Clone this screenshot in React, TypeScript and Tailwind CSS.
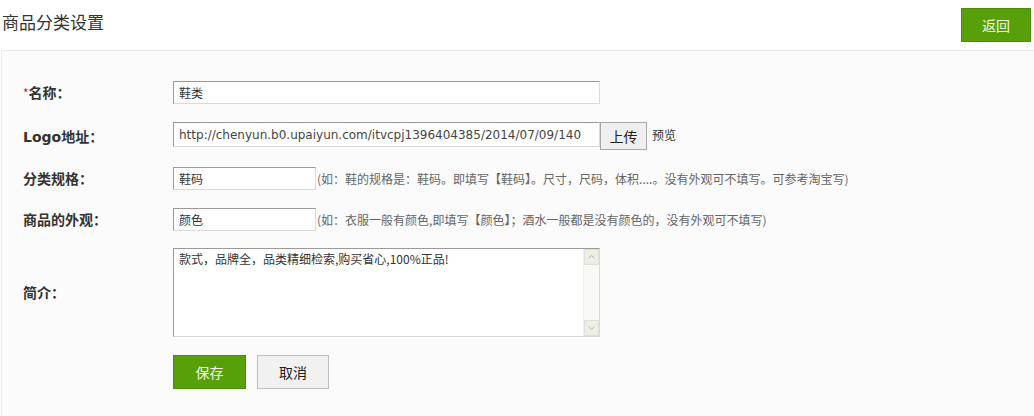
const cjk = "font-['Noto_Sans_CJK_SC','DejaVu_Sans',sans-serif]";

const Label = ({ children, required }: { children: React.ReactNode; required?: boolean }) => (
  <div className="w-[171px] shrink-0 pl-[21px] text-[14px] font-bold text-[#333]">
    {required && <span className="text-[#e02222] text-[12px] font-normal">*</span>}
    {children}
  </div>
);

const inputCls =
  "h-[23px] bg-white border border-t-[#9a9a9a] border-l-[#9a9a9a] border-b-[#dadada] border-r-[#dadada] pl-[5px] text-[12px] text-[#333] flex items-center";

export default function App() {
  return (
    <div className={`w-[1034px] h-[416px] overflow-hidden bg-white flex flex-col ${cjk}`}>
      <div className="h-[50px] shrink-0 flex justify-between items-start">
        <h2 className="ml-[2px] mt-[10px] text-[17px] text-[#333] leading-[24px]">商品分类设置</h2>
        <button className="mt-[8px] mr-[3px] w-[70px] h-[34px] bg-[#58a00a] border border-[#4c8a0a] text-[14px] text-[#f0f8e6]">
          返回
        </button>
      </div>

      <div className="flex-1 ml-[1px] border-t border-l border-[#ebebeb] bg-[#fbfbfb] flex flex-col">
        <div className="mt-[30px] flex items-center">
          <Label required>名称：</Label>
          <div className={`${inputCls} w-[427px]`}>鞋类</div>
        </div>

        <div className="mt-[18px] flex items-start">
          <Label>
            <span className="block pt-[4px] font-['DejaVu_Sans','Noto_Sans_CJK_SC',sans-serif]">
              Logo<span className={cjk}>地址：</span>
            </span>
          </Label>
          <div className={`${inputCls} w-[427px] h-[25px] overflow-hidden whitespace-nowrap font-['DejaVu_Sans',sans-serif] text-[12.4px] text-[#444]`}>
            http://chenyun.b0.upaiyun.com/itvcpj1396404385/2014/07/09/140
          </div>
          <button className="w-[47px] h-[28px] bg-[#efefef] border border-[#a8a8a8] text-[14px] text-[#222]">
            上传
          </button>
          <span className="ml-[5px] mt-[4px] text-[12px] text-[#333]">预览</span>
        </div>

        <div className="mt-[17px] flex items-center">
          <Label>分类规格：</Label>
          <div className={`${inputCls} w-[143px]`}>鞋码</div>
          <span className="ml-[1px] text-[12px] text-[#666] whitespace-nowrap">
            (如：鞋的规格是：鞋码。即填写【鞋码】。尺寸，尺码，体积....。没有外观可不填写。可参考淘宝写)
          </span>
        </div>

        <div className="mt-[18px] flex items-center">
          <Label>商品的外观：</Label>
          <div className={`${inputCls} w-[143px]`}>颜色</div>
          <span className="ml-[1px] text-[12px] text-[#666] whitespace-nowrap">
            (如：衣服一般有颜色,即填写【颜色】；酒水一般都是没有颜色的，没有外观可不填写)
          </span>
        </div>

        <div className="mt-[17px] flex items-center">
          <Label>简介：</Label>
          <div className="w-[427px] h-[89px] bg-white border border-t-[#9a9a9a] border-l-[#9a9a9a] border-b-[#dadada] border-r-[#dadada] flex">
            <div className="flex-1 pl-[5px] pt-[2px] text-[12px] text-[#333] leading-[16px]">
              款式，品牌全，品类精细检索,购买省心,100%正品!
            </div>
            <div className="w-[16px] bg-[#fafaf4] border-l border-[#eeeeee] flex flex-col justify-between">
              <div className="h-[16px] bg-[#eeeee6] border border-[#e0e0d8] flex items-center justify-center">
                <svg width="7" height="4" viewBox="0 0 7 4"><path d="M0.5 3.5L3.5 0.5L6.5 3.5" stroke="#b8b8b0" fill="none" /></svg>
              </div>
              <div className="h-[16px] bg-[#eeeee6] border border-[#e0e0d8] flex items-center justify-center">
                <svg width="7" height="4" viewBox="0 0 7 4"><path d="M0.5 0.5L3.5 3.5L6.5 0.5" stroke="#b8b8b0" fill="none" /></svg>
              </div>
            </div>
          </div>
        </div>

        <div className="mt-[18px] ml-[171px] flex gap-[11px]">
          <button className="w-[73px] h-[34px] bg-[#58a00a] border border-[#4c8a0a] text-[14px] text-[#f0f8e6]">
            保存
          </button>
          <button className="w-[72px] h-[34px] bg-[#f1f1f1] border border-[#bdbdbd] text-[14px] text-[#222]">
            取消
          </button>
        </div>
      </div>
    </div>
  );
}
